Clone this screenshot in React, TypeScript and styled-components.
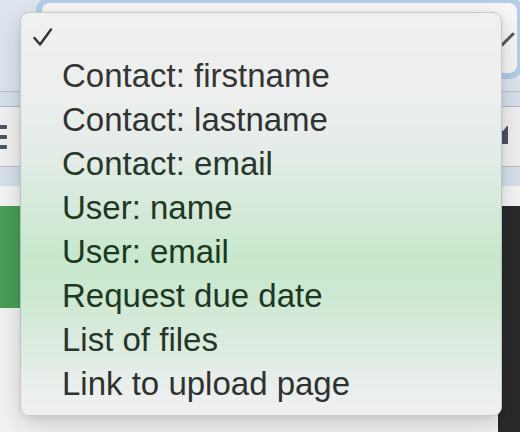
import React from 'react';
import styled, { createGlobalStyle } from 'styled-components';

const GlobalStyle = createGlobalStyle`
  html, body {
    margin: 0;
    padding: 0;
    background: #f3f3f3;
  }
  body {
    font-family: "Liberation Sans", Arial, sans-serif;
  }
`;

// 菜单项
const items = [
  { label: 'Contact: firstname', tone: '#333533' },
  { label: 'Contact: lastname', tone: '#2f3431' },
  { label: 'Contact: email', tone: '#26372b' },
  { label: 'User: name', tone: '#1e3823' },
  { label: 'User: email', tone: '#1b3821' },
  { label: 'Request due date', tone: '#1d3822' },
  { label: 'List of files', tone: '#253729' },
  { label: 'Link to upload page', tone: '#2e3330' },
];

const App: React.FC = () => {
  return (
    <Page>
      <GlobalStyle />
      <Header>
        <SearchField>
          <FieldChevron width="26" height="16" viewBox="0 0 26 16">
            <path d="M2 2 L13 13 L24 2" fill="none" stroke="#545759" strokeWidth="3" strokeLinecap="round" strokeLinejoin="round" />
          </FieldChevron>
        </SearchField>
      </Header>
      <Band />
      <Toolbar>
        <svg width="8" height="26" viewBox="0 0 8 26">
          <rect x="-4" y="1" width="11" height="4" rx="1" fill="#4d5660" />
          <rect x="-4" y="11" width="11" height="4" rx="1" fill="#4d5660" />
          <rect x="-4" y="21" width="11" height="4" rx="1" fill="#4d5660" />
        </svg>
        <ToolIcon width="10" height="18" viewBox="0 0 10 18">
          <path d="M0 3 L3 5 L7 0 L8 0 L8 18 L0 18 Z" fill="#4b5560" />
        </ToolIcon>
      </Toolbar>
      <Band $tall />
      <Gap />
      <Content>
        <GreenSide />
        <Main />
        <DarkSide />
      </Content>

      <Menu>
        <CheckRow>
          <svg width="20" height="19" viewBox="0 0 20 19">
            <path d="M1.5 10 L7 16.5 L18 1.5" fill="none" stroke="#333" strokeWidth="2.4" strokeLinecap="round" strokeLinejoin="round" />
          </svg>
        </CheckRow>
        {items.map((it) => (
          <MenuItem key={it.label} $tone={it.tone}>{it.label}</MenuItem>
        ))}
      </Menu>
    </Page>
  );
};

const Page = styled.div`
  position: relative;
  width: 520px;
  height: 432px;
  overflow: hidden;
  background: #f3f3f3;
  display: flex;
  flex-direction: column;
`;

const Header = styled.div`
  height: 88px;
  flex: none;
  background: #dde5ee;
  border-bottom: 1px solid #b9bec4;
  padding: 3px 0 0 42px;
  box-sizing: content-box;
  overflow: hidden;
`;

const SearchField = styled.div`
  position: relative;
  width: 475px;
  height: 70px;
  background: #f6f6f6;
  border-radius: 8px;
  box-shadow: 0 0 0 6px #b3cde8;
`;

// 下拉箭头，左半被菜单遮住
const FieldChevron = styled.svg`
  position: absolute;
  left: 447px;
  top: 29px;
`;

const Band = styled.div<{ $tall?: boolean }>`
  flex: none;
  height: ${(p) => (p.$tall ? '19px' : '14px')};
  background: #d6e1ec;
  border-bottom: ${(p) => (p.$tall ? 'none' : '1px solid #b6bbc1')};
`;

const Toolbar = styled.div`
  flex: none;
  height: 59px;
  background: #f1f1f1;
  border-bottom: 1px solid #babdc1;
  display: flex;
  align-items: center;
  justify-content: space-between;
  padding-right: 10px;
`;

const ToolIcon = styled.svg`
  margin-top: -4px;
`;

const Gap = styled.div`
  flex: none;
  height: 20px;
  background: #f5f5f5;
`;

const Content = styled.div`
  flex: 1;
  display: grid;
  grid-template-columns: 20px 1fr 22px;
`;

const GreenSide = styled.div`
  height: 102px;
  background: #4a9d58;
`;

const Main = styled.div`
  background: #f4f4f4;
`;

const DarkSide = styled.div`
  background: #2a2a2a;
`;

const Menu = styled.div`
  position: absolute;
  left: 20px;
  top: 12px;
  width: 482px;
  height: 404px;
  box-sizing: border-box;
  border-radius: 9px;
  border: 1px solid rgba(0, 0, 0, 0.16);
  padding: 4px 0 0 41px;
  background: linear-gradient(
    180deg,
    #eff0f0 0%,
    #ecefee 20%,
    #e4ece7 35%,
    #d3e9d8 50%,
    #c8e8cd 60%,
    #cce8d1 70%,
    #dcebdf 82%,
    #ebefed 94%,
    #eef0ef 100%
  );
  box-shadow: 0 10px 28px rgba(0, 0, 0, 0.16), 0 2px 6px rgba(0, 0, 0, 0.08);
`;

const CheckRow = styled.div`
  height: 37px;
  display: flex;
  align-items: center;
  margin-left: -29px;
  padding-top: 4px;
  box-sizing: border-box;
`;

const MenuItem = styled.div<{ $tone: string }>`
  height: 44px;
  line-height: 44px;
  font-size: 33px;
  color: ${(p) => p.$tone};
  white-space: nowrap;
`;

export default App;
